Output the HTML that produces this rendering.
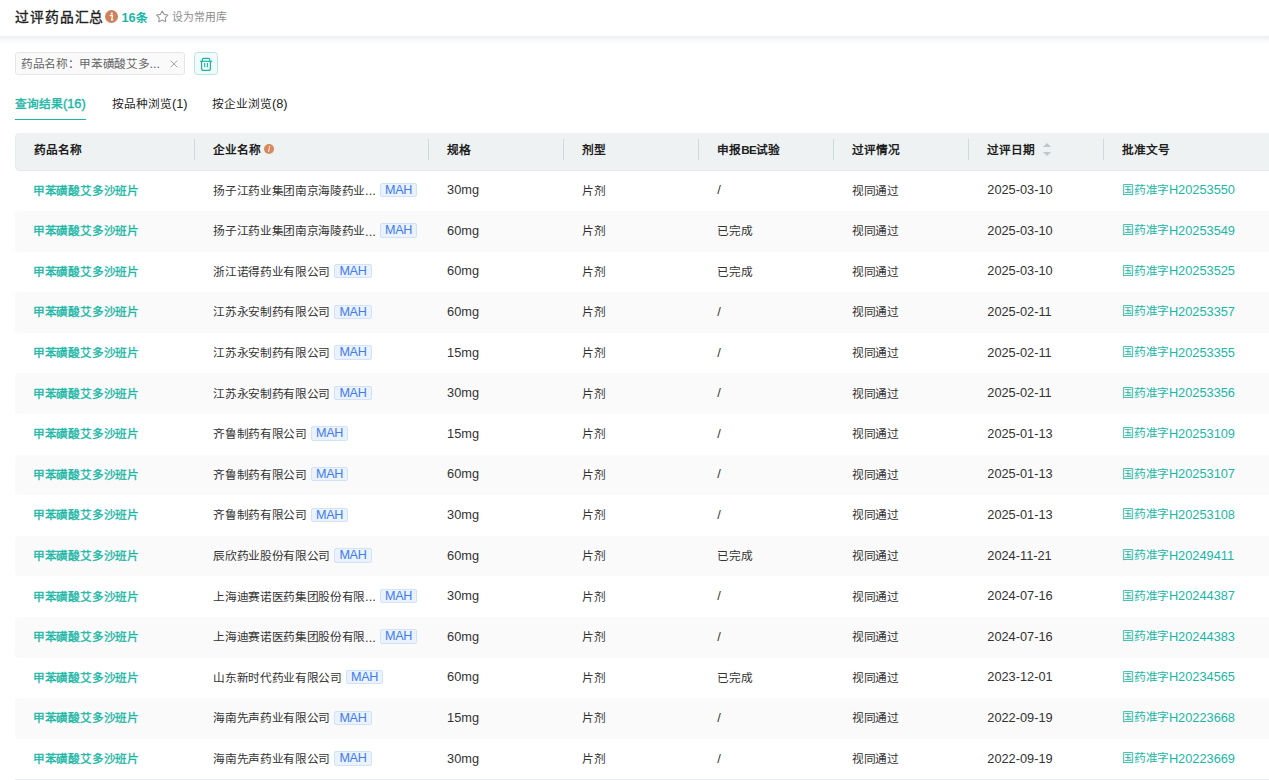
<!DOCTYPE html>
<html lang="zh-CN"><head><meta charset="utf-8"><style>
*{margin:0;padding:0;box-sizing:border-box}
html,body{width:1269px;height:780px;overflow:hidden;background:#fff}
body{position:relative;font-family:"Liberation Sans",sans-serif;color:#333;font-size:11.7px}
.l{font-size:1.094em;letter-spacing:0}
.row .c{letter-spacing:-0.33px}
.row .l{position:relative;top:0.7px}
.ht .l{font-size:1.0em;letter-spacing:-0.6px}
.topbar{position:absolute;left:0;top:0;width:1269px;height:36px;background:#fff}
.title{position:absolute;left:15px;top:8.6px;font-size:13.8px;letter-spacing:0.9px;font-weight:normal;-webkit-text-stroke:0.35px #222;color:#222;line-height:18px;white-space:nowrap}
.info{position:absolute;left:105px;top:10px;width:13px;height:13px;border-radius:50%;background:#d0805a}
.cnt{position:absolute;left:121.5px;top:9px;font-size:11.7px;font-weight:bold;color:#1bb7a6;line-height:18px}
.star{position:absolute;left:152px;top:6px}
.setlib{position:absolute;left:172px;top:9px;font-size:10.8px;color:#8c8c8c;line-height:16px}
.shadow{position:absolute;left:0;top:36px;width:1269px;height:8.5px;background:linear-gradient(#eceef1 0%,#f4f5f7 30%,#fbfbfc 62%,#fff 100%)}
.tag{position:absolute;left:15px;top:52.3px;width:169.6px;height:22.3px;border:1px solid #e6e6e6;border-radius:3px;background:#fafafa}
.tagt{position:absolute;left:5px;top:2px;font-size:11.7px;letter-spacing:-0.33px;color:#666;line-height:17px;white-space:nowrap}
.tagx{position:absolute;left:153px;top:3px;font-size:13px;color:#aaa;line-height:16px}
.trash{position:absolute;left:194px;top:52.2px;width:23.8px;height:22.5px;border:1px solid #b6e6e0;border-radius:3.5px;background:#f2fbfa}
.tab{position:absolute;top:95px;font-size:11.7px;line-height:18px;color:#222;white-space:nowrap}
.tab.on{color:#1bb7a6;font-weight:normal;-webkit-text-stroke:0.4px #1bb7a6}
.uline{position:absolute;left:15px;top:118.6px;width:71px;height:1.8px;background:#1bb7a6}
.thead{position:absolute;left:15px;top:133px;width:1300px;height:38px;background:#eef2f3;border-radius:4.5px 0 0 4.5px;border-bottom:1px solid #e8eaf4;border-left:1px solid #e9ebf3}
.thead .c{top:0;height:37.6px}
.c{position:absolute;top:0;height:40.6px;padding-left:18.9px;display:flex;align-items:center;white-space:nowrap}
.thead .c{margin-left:-16px}
.sep{position:absolute;left:-0.5px;top:6px;width:1px;height:21px;background:#d3d9db}
.ht{font-weight:bold;color:#1f1f1f;position:relative;top:-3px}
.row{position:absolute;left:15px;width:1300px;height:40.6px}
.row .c{margin-left:-15px;top:-1.6px}
.row.alt{background:#fafafa;border-radius:4px 0 0 4px}
.lk{color:#1bb7a6;font-weight:normal;-webkit-text-stroke:0.35px #1bb7a6;letter-spacing:-0.2px;margin-left:-1px;position:relative;top:0px}
.lk2{color:#1bb7a6;position:relative;top:-1px}
.mah{display:inline-block;margin-left:4px;height:14.5px;line-height:13px;padding:0 4.35px;position:relative;top:0.9px;border:1px solid #d2e2fb;background:#eaf2fe;color:#3f7cf0;border-radius:2px;font-size:12.6px}
.hinfo{display:inline-block;margin-left:4px;width:10px;height:10px;border-radius:50%;background:#d0805a}
.sort{display:inline-block;margin-left:10px;width:8px;height:14px;position:relative}
.sort b{position:absolute;left:0;width:0;height:0;border-left:4px solid transparent;border-right:4px solid transparent}
.sort .up{top:1px;border-bottom:5px solid #c4c8cc}
.sort .dn{top:8px;border-top:5px solid #c4c8cc}
.bline{position:absolute;left:15px;top:779px;width:1269px;height:1px;background:#e8eaf4}

</style></head><body>
<div class="topbar">
<div class="title">过评药品汇总</div>
<div class="info"><svg width="13" height="13" viewBox="0 0 13 13"><circle cx="6.8" cy="3.6" r="1.1" fill="#fff"/><path d="M5.2 5.6 H7.6 L6.6 9.6 Q6.5 10.2 7.2 9.9 L7.8 9.6" fill="none" stroke="#fff" stroke-width="1.3" stroke-linecap="round" stroke-linejoin="round"/></svg></div>
<div class="cnt"><span class="l">16</span>条</div>
<svg class="star" width="20" height="20" viewBox="0 0 20 20"><path d="M10.25 5.00 L12.10 8.35 L15.86 9.08 L13.25 11.87 L13.72 15.67 L10.25 14.05 L6.78 15.67 L7.25 11.87 L4.64 9.08 L8.40 8.35 Z" fill="none" stroke="#9a9a9a" stroke-width="1.1" stroke-linejoin="round"/></svg>
<div class="setlib">设为常用库</div>
</div>
<div class="shadow"></div>
<div class="tag"><span class="tagt">药品名称：甲苯磺酸艾多<span class="l">...</span></span><svg style="position:absolute;left:153.5px;top:7px" width="8" height="8" viewBox="0 0 8 8"><path d="M0.6 0.6 L7.2 7.2 M7.2 0.6 L0.6 7.2" stroke="#a3a3a3" stroke-width="1"/></svg></div>
<div class="trash"><svg width="22" height="21" viewBox="0 0 22 21" style="position:absolute;left:0;top:0"><path d="M6.6 8.6 V15.4 Q6.6 17.4 8.6 17.4 H13.4 Q15.4 17.4 15.4 15.4 V8.6" fill="none" stroke="#1bb7a6" stroke-width="1.2"/><path d="M5 8.3 H17.2" stroke="#1bb7a6" stroke-width="1.2"/><path d="M7.3 8.3 V6.6 Q7.3 5.4 8.5 5.4 H13.6 Q14.8 5.4 14.8 6.6 V8.3" fill="none" stroke="#1bb7a6" stroke-width="1.2"/><path d="M9.7 10 V14.3 M12.4 10 V14.3" stroke="#1bb7a6" stroke-width="1.1"/></svg></div>
<div class="tab on" style="left:15px">查询结果<span class="l">(16)</span></div>
<div class="tab" style="left:112px">按品种浏览<span class="l">(1)</span></div>
<div class="tab" style="left:212px">按企业浏览<span class="l">(8)</span></div>
<div class="uline"></div>

<div class="thead"><div class="c" style="left:15px;width:179.5px"><span class="ht">药品名称</span></div><div class="c" style="left:194.5px;width:233.7px"><span class="sep"></span><span class="ht">企业名称</span></div><div class="c" style="left:428.2px;width:135.2px"><span class="sep"></span><span class="ht">规格</span></div><div class="c" style="left:563.4px;width:134.89999999999998px"><span class="sep"></span><span class="ht">剂型</span></div><div class="c" style="left:698.3px;width:134.9000000000001px"><span class="sep"></span><span class="ht">申报<span class="l">BE</span>试验</span></div><div class="c" style="left:833.2px;width:135.19999999999993px"><span class="sep"></span><span class="ht">过评情况</span></div><div class="c" style="left:968.4px;width:134.89999999999998px"><span class="sep"></span><span class="ht">过评日期</span></div><div class="c" style="left:1103.3px;width:196.70000000000005px"><span class="sep"></span><span class="ht">批准文号</span></div></div><svg style="position:absolute;left:263.8px;top:143.9px" width="10" height="10" viewBox="0 0 10 10"><circle cx="5" cy="5" r="5" fill="#d8875a"/><circle cx="5.5" cy="2.7" r="0.8" fill="#fff"/><path d="M5.3 4.4 L4.6 7.6" stroke="#fff" stroke-width="1" stroke-linecap="round"/></svg><svg style="position:absolute;left:1043px;top:143px" width="8" height="13" viewBox="0 0 8 13"><path d="M0 4 L4 0 L8 4 Z M0 9 L8 9 L4 13 Z" fill="#c0c5cf"/></svg><div class="row" style="top:170.40px"><div class="c" style="left:15px;width:179.5px"><span class="lk">甲苯磺酸艾多沙班片</span></div><div class="c" style="left:194.5px;width:233.7px"><span class="co">扬子江药业集团南京海陵药业<span class="l">...</span></span><span class="mah">MAH</span></div><div class="c" style="left:428.2px;width:135.2px"><span class="l">30mg</span></div><div class="c" style="left:563.4px;width:134.89999999999998px">片剂</div><div class="c" style="left:698.3px;width:134.9000000000001px"><span class="l">/</span></div><div class="c" style="left:833.2px;width:135.19999999999993px">视同通过</div><div class="c" style="left:968.4px;width:134.89999999999998px"><span class="l">2025-03-10</span></div><div class="c" style="left:1103.3px;width:196.70000000000005px"><span class="lk2">国药准字<span class="l">H20253550</span></span></div></div><div class="row alt" style="top:211.00px"><div class="c" style="left:15px;width:179.5px"><span class="lk">甲苯磺酸艾多沙班片</span></div><div class="c" style="left:194.5px;width:233.7px"><span class="co">扬子江药业集团南京海陵药业<span class="l">...</span></span><span class="mah">MAH</span></div><div class="c" style="left:428.2px;width:135.2px"><span class="l">60mg</span></div><div class="c" style="left:563.4px;width:134.89999999999998px">片剂</div><div class="c" style="left:698.3px;width:134.9000000000001px">已完成</div><div class="c" style="left:833.2px;width:135.19999999999993px">视同通过</div><div class="c" style="left:968.4px;width:134.89999999999998px"><span class="l">2025-03-10</span></div><div class="c" style="left:1103.3px;width:196.70000000000005px"><span class="lk2">国药准字<span class="l">H20253549</span></span></div></div><div class="row" style="top:251.60px"><div class="c" style="left:15px;width:179.5px"><span class="lk">甲苯磺酸艾多沙班片</span></div><div class="c" style="left:194.5px;width:233.7px"><span class="co">浙江诺得药业有限公司</span><span class="mah">MAH</span></div><div class="c" style="left:428.2px;width:135.2px"><span class="l">60mg</span></div><div class="c" style="left:563.4px;width:134.89999999999998px">片剂</div><div class="c" style="left:698.3px;width:134.9000000000001px">已完成</div><div class="c" style="left:833.2px;width:135.19999999999993px">视同通过</div><div class="c" style="left:968.4px;width:134.89999999999998px"><span class="l">2025-03-10</span></div><div class="c" style="left:1103.3px;width:196.70000000000005px"><span class="lk2">国药准字<span class="l">H20253525</span></span></div></div><div class="row alt" style="top:292.20px"><div class="c" style="left:15px;width:179.5px"><span class="lk">甲苯磺酸艾多沙班片</span></div><div class="c" style="left:194.5px;width:233.7px"><span class="co">江苏永安制药有限公司</span><span class="mah">MAH</span></div><div class="c" style="left:428.2px;width:135.2px"><span class="l">60mg</span></div><div class="c" style="left:563.4px;width:134.89999999999998px">片剂</div><div class="c" style="left:698.3px;width:134.9000000000001px"><span class="l">/</span></div><div class="c" style="left:833.2px;width:135.19999999999993px">视同通过</div><div class="c" style="left:968.4px;width:134.89999999999998px"><span class="l">2025-02-11</span></div><div class="c" style="left:1103.3px;width:196.70000000000005px"><span class="lk2">国药准字<span class="l">H20253357</span></span></div></div><div class="row" style="top:332.80px"><div class="c" style="left:15px;width:179.5px"><span class="lk">甲苯磺酸艾多沙班片</span></div><div class="c" style="left:194.5px;width:233.7px"><span class="co">江苏永安制药有限公司</span><span class="mah">MAH</span></div><div class="c" style="left:428.2px;width:135.2px"><span class="l">15mg</span></div><div class="c" style="left:563.4px;width:134.89999999999998px">片剂</div><div class="c" style="left:698.3px;width:134.9000000000001px"><span class="l">/</span></div><div class="c" style="left:833.2px;width:135.19999999999993px">视同通过</div><div class="c" style="left:968.4px;width:134.89999999999998px"><span class="l">2025-02-11</span></div><div class="c" style="left:1103.3px;width:196.70000000000005px"><span class="lk2">国药准字<span class="l">H20253355</span></span></div></div><div class="row alt" style="top:373.40px"><div class="c" style="left:15px;width:179.5px"><span class="lk">甲苯磺酸艾多沙班片</span></div><div class="c" style="left:194.5px;width:233.7px"><span class="co">江苏永安制药有限公司</span><span class="mah">MAH</span></div><div class="c" style="left:428.2px;width:135.2px"><span class="l">30mg</span></div><div class="c" style="left:563.4px;width:134.89999999999998px">片剂</div><div class="c" style="left:698.3px;width:134.9000000000001px"><span class="l">/</span></div><div class="c" style="left:833.2px;width:135.19999999999993px">视同通过</div><div class="c" style="left:968.4px;width:134.89999999999998px"><span class="l">2025-02-11</span></div><div class="c" style="left:1103.3px;width:196.70000000000005px"><span class="lk2">国药准字<span class="l">H20253356</span></span></div></div><div class="row" style="top:414.00px"><div class="c" style="left:15px;width:179.5px"><span class="lk">甲苯磺酸艾多沙班片</span></div><div class="c" style="left:194.5px;width:233.7px"><span class="co">齐鲁制药有限公司</span><span class="mah">MAH</span></div><div class="c" style="left:428.2px;width:135.2px"><span class="l">15mg</span></div><div class="c" style="left:563.4px;width:134.89999999999998px">片剂</div><div class="c" style="left:698.3px;width:134.9000000000001px"><span class="l">/</span></div><div class="c" style="left:833.2px;width:135.19999999999993px">视同通过</div><div class="c" style="left:968.4px;width:134.89999999999998px"><span class="l">2025-01-13</span></div><div class="c" style="left:1103.3px;width:196.70000000000005px"><span class="lk2">国药准字<span class="l">H20253109</span></span></div></div><div class="row alt" style="top:454.60px"><div class="c" style="left:15px;width:179.5px"><span class="lk">甲苯磺酸艾多沙班片</span></div><div class="c" style="left:194.5px;width:233.7px"><span class="co">齐鲁制药有限公司</span><span class="mah">MAH</span></div><div class="c" style="left:428.2px;width:135.2px"><span class="l">60mg</span></div><div class="c" style="left:563.4px;width:134.89999999999998px">片剂</div><div class="c" style="left:698.3px;width:134.9000000000001px"><span class="l">/</span></div><div class="c" style="left:833.2px;width:135.19999999999993px">视同通过</div><div class="c" style="left:968.4px;width:134.89999999999998px"><span class="l">2025-01-13</span></div><div class="c" style="left:1103.3px;width:196.70000000000005px"><span class="lk2">国药准字<span class="l">H20253107</span></span></div></div><div class="row" style="top:495.20px"><div class="c" style="left:15px;width:179.5px"><span class="lk">甲苯磺酸艾多沙班片</span></div><div class="c" style="left:194.5px;width:233.7px"><span class="co">齐鲁制药有限公司</span><span class="mah">MAH</span></div><div class="c" style="left:428.2px;width:135.2px"><span class="l">30mg</span></div><div class="c" style="left:563.4px;width:134.89999999999998px">片剂</div><div class="c" style="left:698.3px;width:134.9000000000001px"><span class="l">/</span></div><div class="c" style="left:833.2px;width:135.19999999999993px">视同通过</div><div class="c" style="left:968.4px;width:134.89999999999998px"><span class="l">2025-01-13</span></div><div class="c" style="left:1103.3px;width:196.70000000000005px"><span class="lk2">国药准字<span class="l">H20253108</span></span></div></div><div class="row alt" style="top:535.80px"><div class="c" style="left:15px;width:179.5px"><span class="lk">甲苯磺酸艾多沙班片</span></div><div class="c" style="left:194.5px;width:233.7px"><span class="co">辰欣药业股份有限公司</span><span class="mah">MAH</span></div><div class="c" style="left:428.2px;width:135.2px"><span class="l">60mg</span></div><div class="c" style="left:563.4px;width:134.89999999999998px">片剂</div><div class="c" style="left:698.3px;width:134.9000000000001px">已完成</div><div class="c" style="left:833.2px;width:135.19999999999993px">视同通过</div><div class="c" style="left:968.4px;width:134.89999999999998px"><span class="l">2024-11-21</span></div><div class="c" style="left:1103.3px;width:196.70000000000005px"><span class="lk2">国药准字<span class="l">H20249411</span></span></div></div><div class="row" style="top:576.40px"><div class="c" style="left:15px;width:179.5px"><span class="lk">甲苯磺酸艾多沙班片</span></div><div class="c" style="left:194.5px;width:233.7px"><span class="co">上海迪赛诺医药集团股份有限<span class="l">...</span></span><span class="mah">MAH</span></div><div class="c" style="left:428.2px;width:135.2px"><span class="l">30mg</span></div><div class="c" style="left:563.4px;width:134.89999999999998px">片剂</div><div class="c" style="left:698.3px;width:134.9000000000001px"><span class="l">/</span></div><div class="c" style="left:833.2px;width:135.19999999999993px">视同通过</div><div class="c" style="left:968.4px;width:134.89999999999998px"><span class="l">2024-07-16</span></div><div class="c" style="left:1103.3px;width:196.70000000000005px"><span class="lk2">国药准字<span class="l">H20244387</span></span></div></div><div class="row alt" style="top:617.00px"><div class="c" style="left:15px;width:179.5px"><span class="lk">甲苯磺酸艾多沙班片</span></div><div class="c" style="left:194.5px;width:233.7px"><span class="co">上海迪赛诺医药集团股份有限<span class="l">...</span></span><span class="mah">MAH</span></div><div class="c" style="left:428.2px;width:135.2px"><span class="l">60mg</span></div><div class="c" style="left:563.4px;width:134.89999999999998px">片剂</div><div class="c" style="left:698.3px;width:134.9000000000001px"><span class="l">/</span></div><div class="c" style="left:833.2px;width:135.19999999999993px">视同通过</div><div class="c" style="left:968.4px;width:134.89999999999998px"><span class="l">2024-07-16</span></div><div class="c" style="left:1103.3px;width:196.70000000000005px"><span class="lk2">国药准字<span class="l">H20244383</span></span></div></div><div class="row" style="top:657.60px"><div class="c" style="left:15px;width:179.5px"><span class="lk">甲苯磺酸艾多沙班片</span></div><div class="c" style="left:194.5px;width:233.7px"><span class="co">山东新时代药业有限公司</span><span class="mah">MAH</span></div><div class="c" style="left:428.2px;width:135.2px"><span class="l">60mg</span></div><div class="c" style="left:563.4px;width:134.89999999999998px">片剂</div><div class="c" style="left:698.3px;width:134.9000000000001px">已完成</div><div class="c" style="left:833.2px;width:135.19999999999993px">视同通过</div><div class="c" style="left:968.4px;width:134.89999999999998px"><span class="l">2023-12-01</span></div><div class="c" style="left:1103.3px;width:196.70000000000005px"><span class="lk2">国药准字<span class="l">H20234565</span></span></div></div><div class="row alt" style="top:698.20px"><div class="c" style="left:15px;width:179.5px"><span class="lk">甲苯磺酸艾多沙班片</span></div><div class="c" style="left:194.5px;width:233.7px"><span class="co">海南先声药业有限公司</span><span class="mah">MAH</span></div><div class="c" style="left:428.2px;width:135.2px"><span class="l">15mg</span></div><div class="c" style="left:563.4px;width:134.89999999999998px">片剂</div><div class="c" style="left:698.3px;width:134.9000000000001px"><span class="l">/</span></div><div class="c" style="left:833.2px;width:135.19999999999993px">视同通过</div><div class="c" style="left:968.4px;width:134.89999999999998px"><span class="l">2022-09-19</span></div><div class="c" style="left:1103.3px;width:196.70000000000005px"><span class="lk2">国药准字<span class="l">H20223668</span></span></div></div><div class="row" style="top:738.80px"><div class="c" style="left:15px;width:179.5px"><span class="lk">甲苯磺酸艾多沙班片</span></div><div class="c" style="left:194.5px;width:233.7px"><span class="co">海南先声药业有限公司</span><span class="mah">MAH</span></div><div class="c" style="left:428.2px;width:135.2px"><span class="l">30mg</span></div><div class="c" style="left:563.4px;width:134.89999999999998px">片剂</div><div class="c" style="left:698.3px;width:134.9000000000001px"><span class="l">/</span></div><div class="c" style="left:833.2px;width:135.19999999999993px">视同通过</div><div class="c" style="left:968.4px;width:134.89999999999998px"><span class="l">2022-09-19</span></div><div class="c" style="left:1103.3px;width:196.70000000000005px"><span class="lk2">国药准字<span class="l">H20223669</span></span></div></div>
<div class="bline"></div>
</body></html>
